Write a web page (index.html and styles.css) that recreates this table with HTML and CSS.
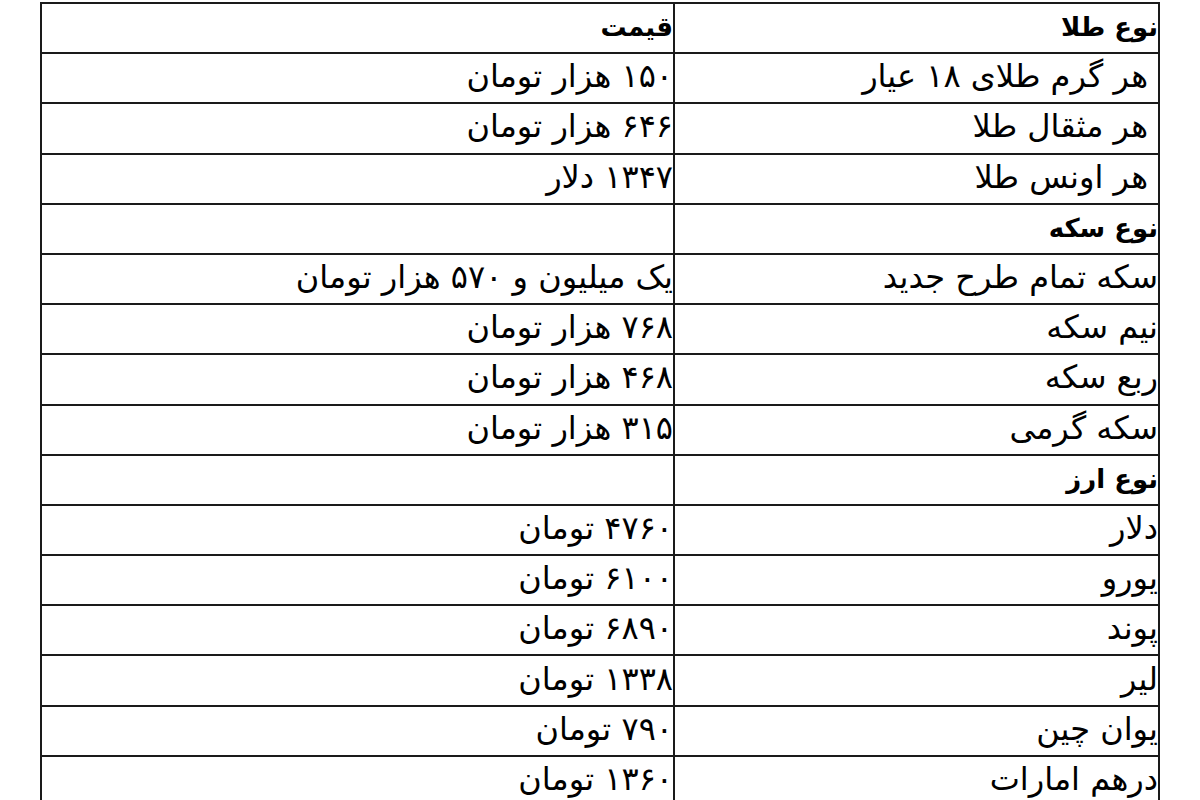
FILE: index.html
```html
<!DOCTYPE html>
<html lang="fa" dir="rtl">
<head>
<meta charset="utf-8">
<link rel="stylesheet" href="styles.css">
</head>
<body>
<table class="prices">
<tbody>
<tr class="head"><td class="name">نوع طلا</td><td class="price">قیمت</td></tr>
<tr><td class="name indent">هر گرم طلای ۱۸ عیار</td><td class="price">۱۵۰ هزار تومان</td></tr>
<tr><td class="name indent">هر مثقال طلا</td><td class="price">۶۴۶ هزار تومان</td></tr>
<tr><td class="name indent">هر اونس طلا</td><td class="price">۱۳۴۷ دلار</td></tr>
<tr class="head"><td class="name">نوع سکه</td><td class="price"></td></tr>
<tr><td class="name">سکه تمام طرح جدید</td><td class="price">یک میلیون و ۵۷۰ هزار تومان</td></tr>
<tr><td class="name">نیم سکه</td><td class="price">۷۶۸ هزار تومان</td></tr>
<tr><td class="name">ربع سکه</td><td class="price">۴۶۸ هزار تومان</td></tr>
<tr><td class="name">سکه گرمی</td><td class="price">۳۱۵ هزار تومان</td></tr>
<tr class="head"><td class="name">نوع ارز</td><td class="price"></td></tr>
<tr><td class="name">دلار</td><td class="price">۴۷۶۰ تومان</td></tr>
<tr><td class="name">یورو</td><td class="price">۶۱۰۰ تومان</td></tr>
<tr><td class="name">پوند</td><td class="price">۶۸۹۰ تومان</td></tr>
<tr><td class="name">لیر</td><td class="price">۱۳۳۸ تومان</td></tr>
<tr><td class="name">یوان چین</td><td class="price">۷۹۰ تومان</td></tr>
<tr><td class="name">درهم امارات</td><td class="price">۱۳۶۰ تومان</td></tr>
</tbody>
</table>
</body>
</html>
```
FILE: styles.css
```css
html, body {
  margin: 0;
  padding: 0;
  background: #ffffff;
}
body {
  padding: 2px 40px 0 0;
  font-family: "DejaVu Sans", sans-serif;
  color: #000000;
}
.prices {
  border-collapse: collapse;
  width: 1120px;
  table-layout: fixed;
}
.prices td {
  border: 2px solid #1a1a1a;
  height: 44.2px;
  padding: 0 0 4px 0;
  font-size: 32px;
  line-height: 36px;
  text-align: right;
  vertical-align: middle;
  white-space: nowrap;
}
.prices .name {
  width: 483px;
}
.prices .indent {
  padding-right: 10px;
}
.prices .head td {
  height: 46.2px;
  font-size: 26px;
  font-weight: bold;
  padding-bottom: 2px;
}
```
